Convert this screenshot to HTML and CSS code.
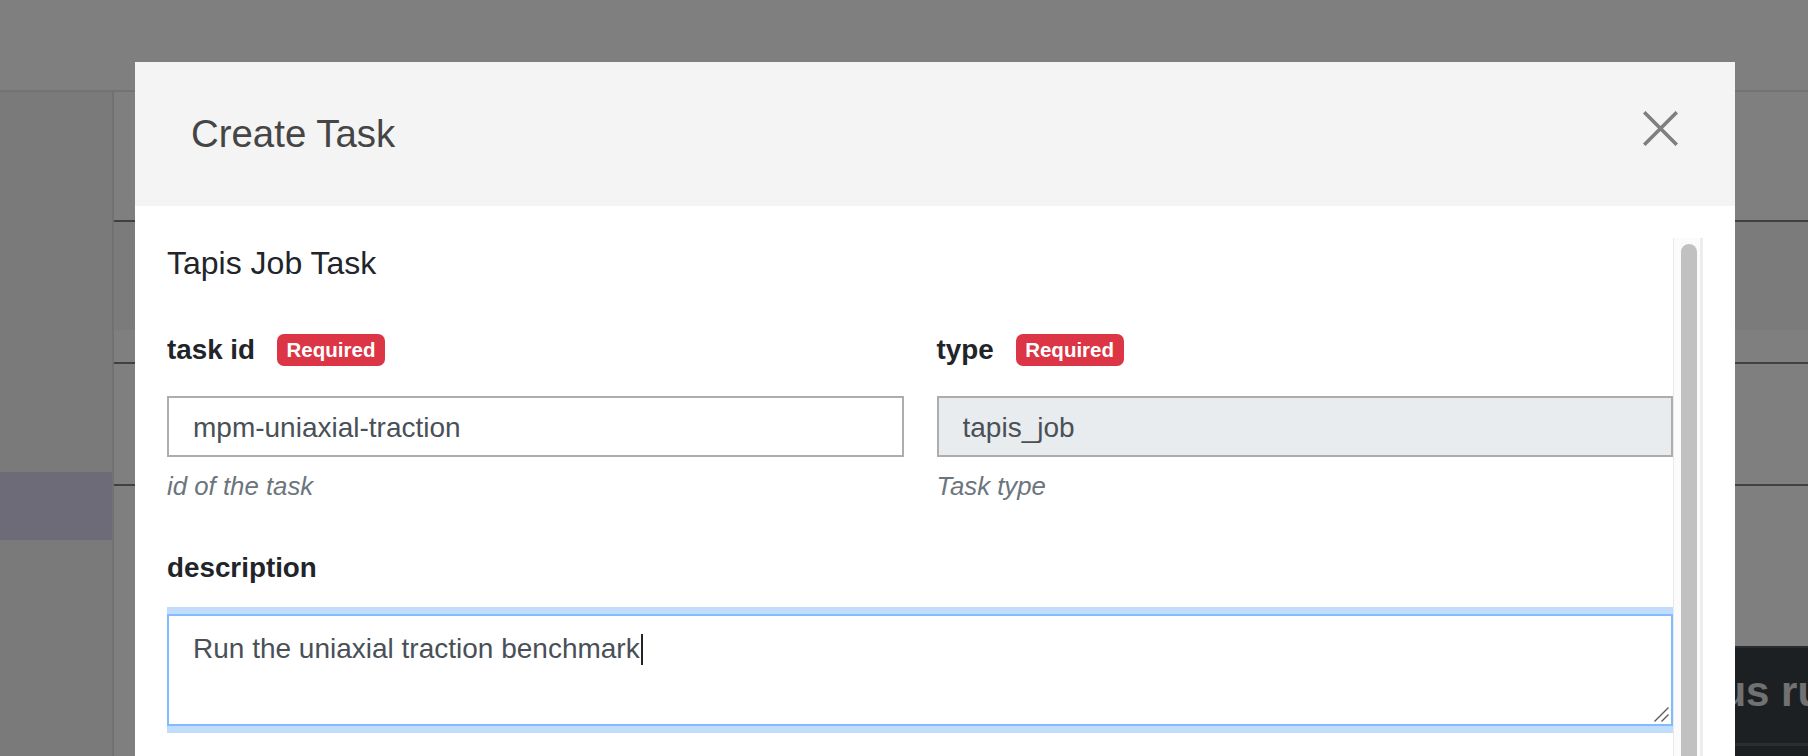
FILE: index.html
```html
<!DOCTYPE html>
<html lang="en">
<head>
<meta charset="utf-8">
<title>Create Task</title>
<link rel="stylesheet" href="styles.css">
</head>
<body>
<div class="app">
  <header class="topnav"></header>
  <div class="layout">
    <aside class="sidebar">
      <div class="side-item active"></div>
    </aside>
    <main class="main">
      <div class="block block-a"></div>
      <div class="block block-b"><div class="stripe"></div></div>
      <div class="block block-c"></div>
      <div class="block block-d"></div>
      <section class="dark-card">
        <h2 class="dark-title">Previous runs</h2>
      </section>
    </main>
  </div>
</div>

<div class="backdrop"></div>

<div class="modal-layer">
  <div class="modal">
    <div class="modal-header">
      <h4 class="modal-title">Create Task</h4>
      <button class="close" type="button" aria-label="Close">
        <svg width="35" height="35" viewBox="0 0 35 35"><path d="M1.2 1.2L33.8 33.8M33.8 1.2L1.2 33.8" stroke="#7f7f7f" stroke-width="3.6" fill="none"/></svg>
      </button>
    </div>
    <div class="modal-body">
      <div class="form-scroll">
        <h5 class="section-title">Tapis Job Task</h5>
        <div class="grid">
          <div class="field">
            <div class="label-row"><span class="label">task id</span><span class="badge">Required</span></div>
            <input class="input" type="text" value="mpm-uniaxial-traction" readonly>
            <div class="help">id of the task</div>
          </div>
          <div class="field">
            <div class="label-row"><span class="label">type</span><span class="badge">Required</span></div>
            <input class="input input-disabled" type="text" value="tapis_job" readonly>
            <div class="help">Task type</div>
          </div>
        </div>
        <div class="field">
          <div class="label-row"><span class="label">description</span></div>
          <div class="textarea">Run the uniaxial traction benchmark<span class="caret"></span>
            <svg class="resize" width="15" height="15" viewBox="0 0 15 15"><path d="M0.5 14.5L14.5 0.5M7.5 14.5L14.5 7.5" stroke="#5a5a5a" stroke-width="1.4" fill="none"/></svg>
          </div>
        </div>
      </div>
      <div class="scrollbar"><div class="thumb"></div></div>
    </div>
  </div>
</div>
</body>
</html>
```
FILE: styles.css
```css
* { box-sizing: border-box; }

html, body {
  margin: 0;
  height: 756px;
  overflow: hidden;
}

body {
  font-family: "Liberation Sans", Arial, sans-serif;
  background: #ffffff;
  color: #212529;
}

/* ---------- page behind the modal ---------- */
.app {
  height: 100%;
  display: flex;
  flex-direction: column;
}

.topnav {
  flex: none;
  height: 92px;
  background: #ffffff;
  border-bottom: 2px solid #e6e6e6;
}

.layout {
  flex: 1;
  display: flex;
  min-height: 0;
}

.sidebar {
  flex: none;
  width: 114px;
  background: #f4f4f4;
  border-right: 2px solid #e2e2e2;
  padding-top: 380px;
}

.side-item.active {
  height: 68px;
  background: #dad6f0;
}

.main {
  flex: 1;
  display: flex;
  flex-direction: column;
  min-width: 0;
}

.block {
  flex: none;
  background: #ffffff;
}

.block-a { height: 130px; border-bottom: 2px solid #808080; }
.block-b { height: 142px; border-bottom: 2px solid #808080; }
.block-b .stripe { height: 108px; background: #f6f6f6; }
.block-c { height: 122px; border-bottom: 2px solid #808080; }
.block-d { height: 160px; }

.dark-card {
  flex: 1;
  margin-left: 60px;
  background: #3a4046;
  border-top: 2px solid #545a60;
  overflow: hidden;
}

.dark-title {
  margin: 0;
  height: 98px;
  padding-left: 1418px;
  line-height: 88px;
  font-size: 42px;
  font-weight: bold;
  color: #e2e2e2;
  white-space: nowrap;
  border-bottom: 3px solid #545a60;
}

.backdrop {
  position: fixed;
  inset: 0;
  background: rgba(0, 0, 0, 0.5);
}

/* ---------- modal ---------- */
.modal-layer {
  position: fixed;
  inset: 0;
  padding: 62px 0 0 135px;
}

.modal {
  width: 1600px;
  height: 820px;
  background: #ffffff;
  display: flex;
  flex-direction: column;
}

.modal-header {
  flex: none;
  height: 144px;
  background: #f4f4f4;
  display: flex;
  align-items: center;
  justify-content: space-between;
  padding: 0 57px 0 56px;
}

.modal-title {
  margin: 0;
  font-size: 38.4px;
  line-height: 46px;
  font-weight: normal;
  color: #454545;
}

.close {
  width: 35px;
  height: 35px;
  margin-top: -11px;
  padding: 0;
  border: 0;
  background: transparent;
  display: block;
}

.close svg { display: block; }

.modal-body {
  flex: 1;
  min-height: 0;
  display: flex;
  padding: 32px 32px 0;
}

.form-scroll {
  flex: 1;
  min-width: 0;
  overflow: hidden;
}

.section-title {
  margin: 0;
  padding-top: 1px;
  height: 48px;
  font-size: 32px;
  line-height: 48px;
  font-weight: normal;
  color: #212529;
}

.grid {
  display: grid;
  grid-template-columns: 1fr 1fr;
  column-gap: 33px;
  margin-top: 43px;
}

.field {
  margin-bottom: 46px;
}

.grid .field {
  margin-bottom: 43px;
}

.label-row {
  display: flex;
  align-items: center;
  height: 41px;
  margin-bottom: 26px;
}

.label {
  font-size: 27.8px;
  line-height: 41px;
  font-weight: bold;
  color: #212529;
}

.badge {
  margin-left: 22px;
  padding: 6px 9.5px;
  font-size: 20.5px;
  line-height: 20px;
  font-weight: bold;
  color: #ffffff;
  background: #dc3545;
  border-radius: 7px;
}

.input {
  display: block;
  width: 100%;
  height: 61px;
  margin: 0;
  padding: 3px 24px 0;
  border: 2px solid #adadad;
  border-radius: 0;
  background: #ffffff;
  font-family: "Liberation Sans", Arial, sans-serif;
  font-size: 28px;
  color: #495057;
  outline: none;
}

.input-disabled {
  background: #e9ecef;
}

.help {
  margin-top: 11px;
  font-size: 25.8px;
  line-height: 36px;
  font-style: italic;
  color: #6c757d;
}

.textarea {
  position: relative;
  height: 112px;
  margin-top: 0;
  padding: 12px 24px;
  border: 2px solid #80bdff;
  box-shadow: 0 0 0 7px #c2ddfc;
  font-size: 28px;
  line-height: 41.4px;
  color: #495057;
  background: #ffffff;
}

.caret {
  display: inline-block;
  width: 2px;
  height: 31px;
  margin-left: 1px;
  vertical-align: -7px;
  background: #212529;
}

.resize {
  position: absolute;
  right: 2px;
  bottom: 2px;
}

.scrollbar {
  flex: none;
  width: 30px;
  background: #fbfbfb;
  border-left: 1px solid #e9e9e9;
  border-right: 3px solid #ededed;
  padding: 6px 3px 0 7px;
}

.thumb {
  width: 16px;
  height: 700px;
  background: #c1c1c1;
  border-radius: 8px 8px 0 0;
}
```
